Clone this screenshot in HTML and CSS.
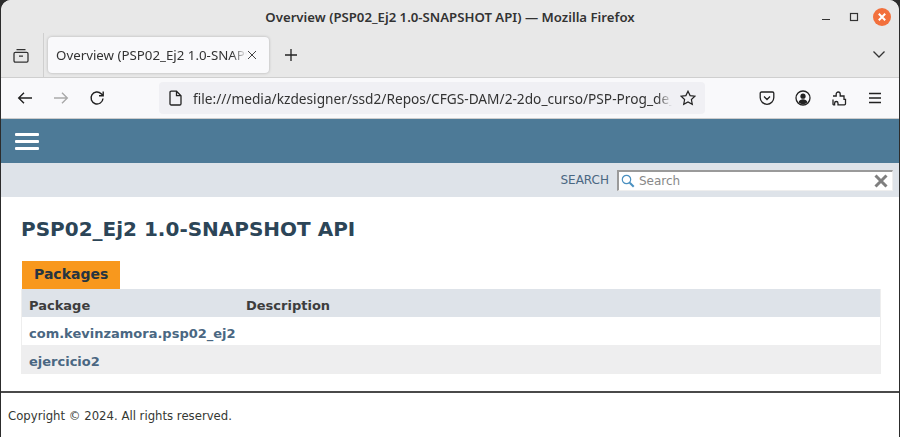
FILE: index.html
```html
<!DOCTYPE html>
<html lang="en">
<head>
  <meta charset="UTF-8" />
  <title>Overview (PSP02_Ej2 1.0-SNAPSHOT API)</title>
  <link rel="stylesheet" href="styles.css">
</head>
<body>
  <div class="window">
    <!-- Browser chrome -->
    <div class="titlebar">
      <div class="title">Overview (PSP02_Ej2 1.0-SNAPSHOT API) — Mozilla Firefox</div>
      <div class="win-controls">
        <svg class="ic" width="16" height="16" viewBox="0 0 16 16"><path d="M4 10.500h8" stroke="#333" stroke-width="1.2" fill="none"/></svg>
        <svg class="ic" width="16" height="16" viewBox="0 0 16 16"><rect x="4.500" y="4.500" width="7" height="7" stroke="#333" stroke-width="1.2" fill="none"/></svg>
        <svg class="ic close" width="18" height="18" viewBox="0 0 18 18"><circle cx="9" cy="9" r="9" fill="#f2703c"/><path d="M5.800 5.800l6.400 6.400M12.200 5.800l-6.400 6.400" stroke="#fff" stroke-width="2" fill="none"/></svg>
      </div>
    </div>
    <div class="tabbar">
      <div class="tab-side">
        <svg width="16" height="16" viewBox="0 0 16 16" fill="none" stroke="#333" stroke-width="1.3"><path d="M3.500 1.700h9M1 5.700c0-.8.500-1.300 1.300-1.300h11.400c.8 0 1.300.5 1.300 1.300v7c0 .9-.5 1.400-1.300 1.400H2.300c-.8 0-1.300-.5-1.300-1.400zM6 8.200h4"/></svg>
      </div>
      <div class="tab">
        <span class="tab-label">Overview (PSP02_Ej2 1.0-SNAPSHOT API)</span>
        <svg width="10" height="10" viewBox="0 0 10 10"><path d="M1 1l8 8M9 1L1 9" stroke="#444" stroke-width="1" fill="none"/></svg>
      </div>
      <svg class="newtab" width="14" height="14" viewBox="0 0 14 14"><path d="M7 1v12M1 7h12" stroke="#222" stroke-width="1.3" fill="none"/></svg>
      <svg class="tabs-down" width="14" height="14" viewBox="0 0 14 14"><path d="M1.500 4.500L7 10l5.500-5.500" stroke="#333" stroke-width="1.3" fill="none"/></svg>
    </div>
    <div class="navbar">
      <div class="nav-buttons">
        <svg width="16" height="16" viewBox="0 0 16 16" fill="none" stroke="#222" stroke-width="1.4"><path d="M15 8H1.700M7 2.700L1.700 8 7 13.300"/></svg>
        <svg width="16" height="16" viewBox="0 0 16 16" fill="none" stroke="#aaa" stroke-width="1.4"><path d="M1 8h13.300M9 2.700L14.300 8 9 13.300"/></svg>
        <svg width="16" height="16" viewBox="0 0 16 16" fill="none" stroke="#222" stroke-width="1.4"><path d="M14 8.500A6 6 0 1 1 12.200 3.700L14 5.500M14.200 1.500v4.200H10"/></svg>
      </div>
      <div class="urlbar">
        <svg width="14" height="16" viewBox="0 0 14 16" fill="none" stroke="#222" stroke-width="1.3"><path d="M2 2.500c0-.8.500-1.300 1.300-1.300H8.500L13 5.700v8c0 .8-.500 1.300-1.300 1.300H3.300c-.8 0-1.300-.5-1.300-1.300zM8.500 1.200v4.500H13"/></svg>
        <span class="url">file:///media/kzdesigner/ssd2/Repos/CFGS-DAM/2-2do_curso/PSP-Prog_de_Servicios</span>
        <svg width="16" height="16" viewBox="0 0 16 16" fill="none" stroke="#222" stroke-width="1.2"><path d="M8 1.200l2.100 4.400 4.800.6-3.500 3.300.9 4.800L8 12l-4.300 2.300.9-4.800L1.100 6.200l4.800-.6z"/></svg>
      </div>
      <div class="nav-tools">
        <svg width="16" height="16" viewBox="0 0 16 16" fill="none" stroke="#222" stroke-width="1.3"><path d="M2.500 2h11c.8 0 1.300.5 1.300 1.300v4.200A6.800 6.800 0 0 1 8 14.300 6.800 6.800 0 0 1 1.200 7.500V3.300C1.200 2.500 1.700 2 2.500 2zM5 6.500l3 3 3-3"/></svg>
        <svg width="16" height="16" viewBox="0 0 16 16"><circle cx="8" cy="8" r="7" fill="none" stroke="#222" stroke-width="1.300"/><circle cx="8" cy="6.200" r="2.600" fill="#222"/><path d="M3.500 12.200c1-2.200 2.600-2.900 4.500-2.900s3.500.7 4.500 2.900A6 6 0 0 1 8 14.200a6 6 0 0 1-4.500-2z" fill="#222"/></svg>
        <svg width="16" height="16" viewBox="0 0 16 16" fill="none" stroke="#222" stroke-width="1.3"><path d="M2 6h3.200V4a2 2 0 0 1 4 0v2H13v3.300h1.500v4.500c0 .6-.4 1-1 1H7v-1.600a1.700 1.700 0 0 0-3.400 0v1.600H2.500c-.3 0-.5-.2-.5-.5V9.500"/></svg>
        <svg width="16" height="16" viewBox="0 0 16 16"><path d="M2 3.500h12M2 8h12M2 12.500h12" stroke="#222" stroke-width="1.300" fill="none"/></svg>
      </div>
    </div>

    <!-- Javadoc page -->
    <div class="page">
      <header class="top-nav">
        <div class="burger"><span></span><span></span><span></span></div>
      </header>
      <div class="sub-nav">
        <label class="search-label" for="search">SEARCH</label>
        <div class="search-box">
          <svg width="14" height="14" viewBox="0 0 14 14" fill="none" stroke="#4a90c0"><circle cx="5.500" cy="5.500" r="4.200" stroke-width="1.200"/><path d="M8.700 8.700l4 4" stroke-width="2"/></svg>
          <input id="search" type="text" placeholder="Search" />
          <svg width="14" height="14" viewBox="0 0 14 14"><path d="M1.500 1.500l11 11M12.500 1.500l-11 11" stroke="#7f7f7f" stroke-width="3" fill="none"/></svg>
        </div>
      </div>
      <main class="content">
        <h1>PSP02_Ej2 1.0-SNAPSHOT API</h1>
        <div class="caption">Packages</div>
        <div class="table">
          <div class="row head"><div class="col-first">Package</div><div>Description</div></div>
          <div class="row"><a class="col-first" href="#">com.kevinzamora.psp02_ej2</a><div></div></div>
          <div class="row even"><a class="col-first" href="#">ejercicio2</a><div></div></div>
        </div>
      </main>
      <footer class="legal">Copyright © 2024. All rights reserved.</footer>
    </div>
  </div>
</body>
</html>
```

FILE: styles.css
```css
* {
  box-sizing: border-box;
}

html, body {
  margin: 0;
  height: 437px;
  overflow: hidden;
  background: #2c2c2c;
}

.window {
  height: 437px;
  margin: 0 1px;
  display: flex;
  flex-direction: column;
  background: #fff;
  border-radius: 10px 10px 0 0;
  overflow: hidden;
  font-family: "Noto Sans", sans-serif;
}

svg {
  display: block;
  flex: none;
}

/* browser chrome */
.titlebar {
  height: 33px;
  flex: none;
  background: #e8e8e8;
  position: relative;
  display: flex;
  align-items: center;
  justify-content: center;
}

.title {
  font-size: 13.2px;
  font-weight: 600;
  color: #333;
}

.win-controls {
  position: absolute;
  right: 8px;
  top: 8px;
  display: flex;
  align-items: center;
  gap: 12px;
}

.close {
  margin-left: -1px;
}

.tabbar {
  height: 45px;
  flex: none;
  background: #e8e8e8;
  border-bottom: 1px solid #cfcfcf;
  display: flex;
  align-items: center;
  position: relative;
}

.tab-side {
  width: 43px;
  height: 44px;
  padding: 15px 0 0 12px;
  border-right: 1px solid #cfcfcf;
}

.tab {
  width: 221px;
  height: 36px;
  margin-left: 4px;
  padding: 0 8px;
  background: #f9f9fb;
  border-radius: 4px;
  box-shadow: 0 0 3px rgba(0, 0, 0, 0.25);
  display: flex;
  align-items: center;
}

.tab-label {
  width: 191px;
  white-space: nowrap;
  overflow: hidden;
  font-size: 13.3px;
  color: #333;
  -webkit-mask-image: linear-gradient(to right, #000 92%, transparent);
  mask-image: linear-gradient(to right, #000 92%, transparent);
}

.newtab {
  margin-left: 15px;
}

.tabs-down {
  position: absolute;
  right: 13px;
  top: 14px;
}

.navbar {
  height: 41px;
  flex: none;
  background: #f9f9fb;
  border-bottom: 1px solid #ccc;
  display: flex;
  align-items: center;
}

.nav-buttons {
  display: flex;
  gap: 20px;
  width: 158px;
  padding-left: 16px;
}

.urlbar {
  width: 546px;
  height: 32px;
  background: #f0f0f4;
  border-radius: 4px;
  display: flex;
  align-items: center;
  padding: 0 8px 0 9px;
  gap: 11px;
}

.url {
  width: 479px;
  margin-right: -3px;
  white-space: nowrap;
  overflow: hidden;
  font-size: 13.7px;
  color: #333;
  -webkit-mask-image: linear-gradient(to right, #000 97%, transparent);
  mask-image: linear-gradient(to right, #000 97%, transparent);
}

.nav-tools {
  display: flex;
  gap: 20px;
  margin-left: 54px;
}

/* javadoc page */
.page {
  flex: 1;
  display: flex;
  flex-direction: column;
  font-family: "DejaVu Sans", sans-serif;
}

.top-nav {
  height: 44px;
  flex: none;
  background: #4d7a97;
  padding: 14px 0 0 14px;
}

.burger span {
  display: block;
  width: 24px;
  height: 3px;
  margin-bottom: 4px;
  background: #fff;
  border-radius: 1px;
}

.sub-nav {
  height: 34px;
  flex: none;
  background: #dee3e9;
  display: flex;
  align-items: center;
  justify-content: flex-end;
  padding-right: 6px;
  gap: 8px;
}

.search-label {
  font-size: 12px;
  color: #4a6782;
}

.search-box {
  width: 276px;
  height: 21px;
  background: #fff;
  border-style: solid;
  border-width: 2px 1px 1px 2px;
  border-color: #9a9a9a #eee #eee #9a9a9a;
  display: flex;
  align-items: center;
  padding: 0 4px 0 2px;
}

.search-box input {
  flex: 1;
  min-width: 0;
  margin-left: 4px;
  border: 0;
  padding: 0;
  outline: 0;
  font: 12px "DejaVu Sans", sans-serif;
}

.search-box input::placeholder {
  color: #888;
}

.content {
  flex: 1;
  padding: 0 18px 0 20px;
}

h1 {
  margin: 21px 0 20px;
  font-size: 20px;
  line-height: 23px;
  font-weight: bold;
  color: #2c4557;
}

.caption {
  width: 98px;
  height: 28px;
  margin-left: 1px;
  padding-left: 12px;
  background: #f8981d;
  color: #253441;
  font-size: 14px;
  font-weight: bold;
  line-height: 26px;
}

.table {
  border: 1px solid #eee;
  border-top: 0;
}

.row {
  height: 28px;
  display: flex;
  align-items: center;
  padding: 4px 0 0 7px;
  font-size: 13px;
  font-weight: bold;
}

.col-first {
  width: 217px;
  white-space: nowrap;
}

.head {
  background: #dee3e9;
  color: #3d3d3d;
}

.even {
  background: #eeeeef;
}

a {
  color: #4a6782;
  text-decoration: none;
}

.legal {
  height: 46px;
  flex: none;
  border-top: 2px solid #4a4a4a;
  padding: 16px 0 0 7px;
  font-size: 11.7px;
  color: #353833;
}
```
